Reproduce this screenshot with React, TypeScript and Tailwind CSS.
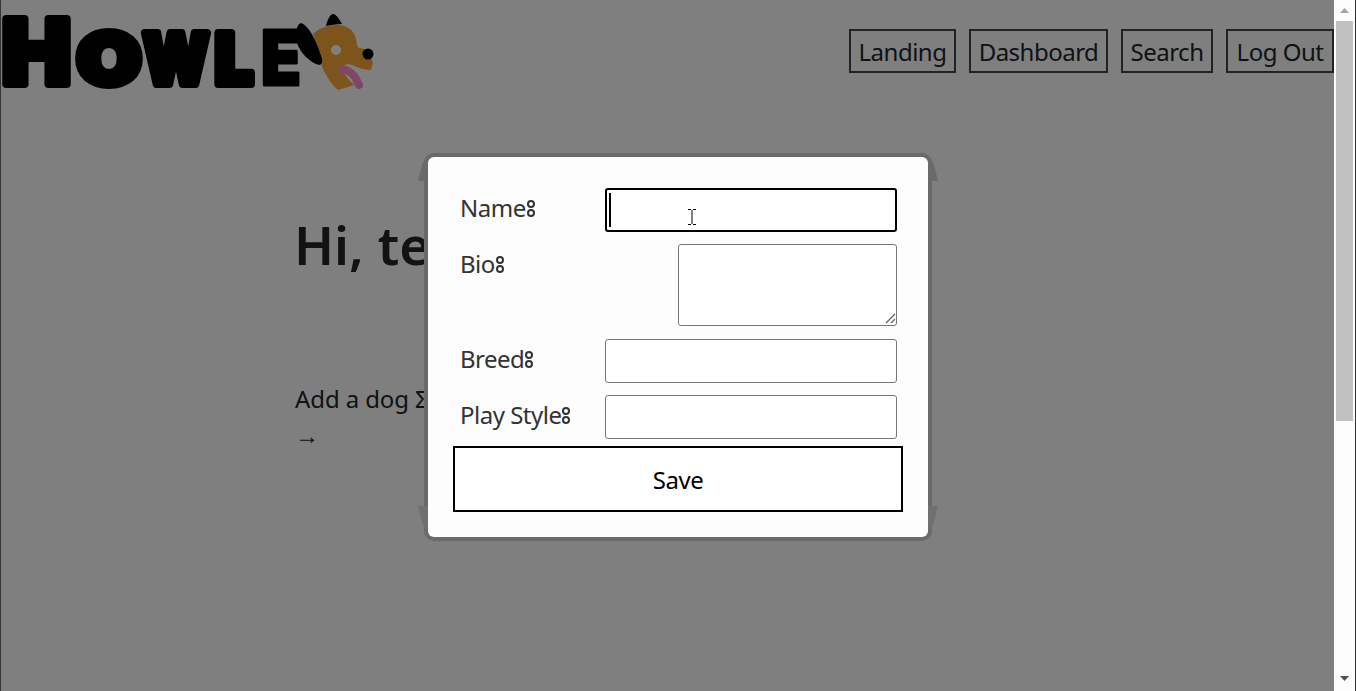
const links = [
  { label: "Landing", width: "w-[107px]" },
  { label: "Dashboard", width: "w-[139px]" },
  { label: "Search", width: "w-[92px]" },
  { label: "Log Out", width: "w-[108px]" },
];

function Logo() {
  return (
    <svg width="380" height="100" viewBox="0 0 380 100" className="shrink-0">
      <g
        fontFamily="Inter, sans-serif"
        fontWeight="900"
        fill="#000"
        stroke="#000"
        strokeWidth="8"
        strokeLinejoin="round"
      >
        <text x="1" y="83" fontSize="90" textLength="69" lengthAdjust="spacingAndGlyphs">H</text>
        <text x="76" y="83" fontSize="70" textLength="64" lengthAdjust="spacingAndGlyphs">O</text>
        <text x="142" y="83" fontSize="70" textLength="66" lengthAdjust="spacingAndGlyphs">W</text>
        <text x="214" y="83" fontSize="70" textLength="38" lengthAdjust="spacingAndGlyphs">L</text>
        <text x="260" y="84" fontSize="76" textLength="40" lengthAdjust="spacingAndGlyphs" strokeWidth="3">E</text>
      </g>
      <path
        d="M312 33C318 27 327 24 336 24C346 24 353 29 355 38C356 43 356 46 358 47C363 47 367 50 369 54L372 62L370 69C362 69 356 66 351 64C345 62 340 65 342 70C345 76 349 80 353 84L337 89C331 84 326 76 322 68C318 58 315 45 312 33Z"
        fill="#fba832"
      />
      <circle cx="335" cy="49" r="5" fill="#fff" />
      <path d="M341 68C347 69 353 73 355 78L358 84" fill="none" stroke="#ff8cd0" strokeWidth="8" strokeLinecap="round" />
      <path d="M300 22C309 25 317 44 321 58C322 63 319 65 315 63C306 59 296 48 295 37C295 30 296 23 300 22Z" fill="#000" />
      <path d="M325 25C326 20 329 13 332 13C335 13 339 19 341 23C335 23 330 24 325 25Z" fill="#000" />
      <circle cx="367" cy="53" r="5.5" fill="#000" />
    </svg>
  );
}

function Colon() {
  return (
    <span className="ml-[1px] inline-flex flex-col gap-[1px] align-[9px]">
      <span className="block size-[8px] rounded-full border-2 border-[#333]" />
      <span className="block size-[8px] rounded-full border-2 border-[#333]" />
    </span>
  );
}

function Ear({ className, d, fill }: { className: string; d: string; fill: string }) {
  return (
    <svg width="10" height="24" viewBox="0 0 10 24" className={`absolute ${className}`}>
      <path d={d} fill={fill} />
    </svg>
  );
}

function Field({ label, focused }: { label: string; focused?: boolean }) {
  return (
    <div className="flex items-start justify-between">
      <label className="h-10 leading-10 tracking-[-0.5px] text-[#333]">
        {label}
        <Colon />
      </label>
      <div className="relative">
        <input
          type="text"
          aria-label={label}
          className={`block h-11 w-[292px] rounded-[3px] bg-white ${
            focused ? "border-2 border-black" : "border border-[#767676]"
          }`}
        />
        {focused && (
          <>
            <span className="absolute left-[4px] top-[5px] h-[34px] w-[2px] bg-black" />
            <svg width="8" height="16" viewBox="0 0 8 16" className="absolute left-[83px] top-[21px]">
              <path d="M0 .5h3M5 .5h3M4 1v14M0 15.5h3M5 15.5h3" stroke="#000" fill="none" />
            </svg>
          </>
        )}
      </div>
    </div>
  );
}

export default function App() {
  return (
    <div className="relative flex h-[691px] w-full overflow-hidden border-l border-[#333] bg-white font-['Noto_Sans',sans-serif] text-[24px] text-[#212529]">
      <div className="min-w-0 flex-1">
        <header className="flex items-start justify-between pt-[1px]">
          <Logo />
          <nav className="mt-[28px] flex gap-[13px]">
            {links.map((link) => (
              <a key={link.label} className={`flex h-[44px] items-center justify-center border-2 border-[#444] pt-[1px] text-[24px] tracking-[-0.5px] ${link.width}`}>
                {link.label}
              </a>
            ))}
          </nav>
        </header>
        <main className="ml-[294px] w-[640px]">
          <h1 className="-ml-[1px] mt-[102px] text-[53px] font-semibold leading-[84px]">Hi, test</h1>
          <p className="mt-[94px] leading-[36px] tracking-[-0.1px]">
            Add a dog Σ&gt;―(〃°ω°〃)♡
            <br />→
          </p>
        </main>
      </div>

      <div className="absolute inset-0 flex justify-center bg-black/50 pr-[1px] pt-[157px]">
        <div className="relative h-[380px] w-[500px] rounded-md bg-[#fdfdfd] pt-[31px] shadow-[0_0_0_4px_#6a6a6a]">
          <Ear className="-left-[10px] top-0" d="M10 0C7 1 5 4 4 8L0 24H10Z" fill="#6a6a6a" />
          <Ear className="-right-[10px] top-0" d="M0 0C3 1 5 4 6 8L10 24H0Z" fill="#6a6a6a" />
          <Ear className="-left-[10px] bottom-[7px]" d="M0 0H10V24C7 23 5 20 4 16Z" fill="#707070" />
          <Ear className="-right-[10px] bottom-[7px]" d="M10 0H0V24C3 23 5 20 6 16Z" fill="#707070" />
          <form className="flex flex-col px-[25px]">
            <div className="flex flex-col pl-[7px] pr-[6px]">
              <Field label="Name" focused />
              <div className="mt-3 flex items-start justify-between">
                <label className="h-10 leading-10 tracking-[-0.5px] text-[#333]">
                  Bio
                  <Colon />
                </label>
                <div className="relative">
                  <textarea aria-label="Bio" className="block h-[82px] w-[219px] resize-none rounded-[3px] border border-[#767676] bg-white" />
                  {/* resize grip */}
                  <svg width="11" height="11" viewBox="0 0 11 11" className="absolute bottom-[2px] right-[1px]">
                    <path d="M1 10L10 1M6 10L10 6" stroke="#606060" strokeWidth="1.2" fill="none" />
                  </svg>
                </div>
              </div>
              <div className="mt-[13px]">
                <Field label="Breed" />
              </div>
              <div className="mt-3">
                <Field label="Play Style" />
              </div>
            </div>
            <button type="button" className="mt-[7px] h-[66px] w-[450px] border-2 border-black bg-white pt-[1px] text-center text-[24px] tracking-[-0.5px] text-black">
              Save
            </button>
          </form>
        </div>
      </div>

      <div className="relative z-10 flex h-full w-[22px] shrink-0 flex-col border-r border-[#333] bg-[#fdfdfd] pl-[2px] pr-[2px] pt-[1px]">
        <div className="flex h-[20px] items-center justify-center">
          <svg width="9" height="6" viewBox="0 0 9 6"><path d="M4.5 0L9 5H0Z" fill="#a3a3a3" /></svg>
        </div>
        <div className="h-[400px] bg-[#c1c1c1]" />
        <div className="mt-auto flex h-[20px] items-center justify-center pb-[4px]">
          <svg width="9" height="6" viewBox="0 0 9 6"><path d="M0 0H9L4.5 5Z" fill="#505050" /></svg>
        </div>
      </div>
    </div>
  );
}
